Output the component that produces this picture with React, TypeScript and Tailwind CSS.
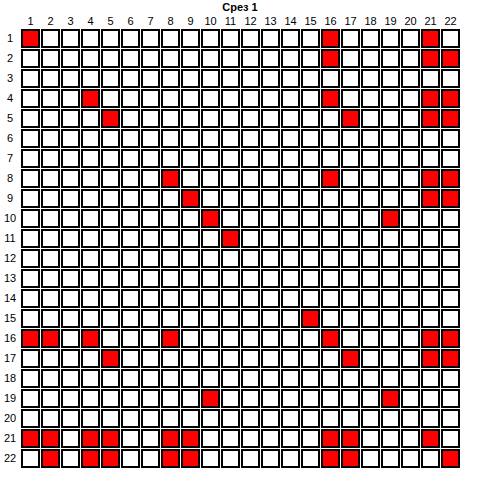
const N = 22;

// red cells per row (1-based column numbers)
const marked: Record<number, number[]> = {
  1: [1, 16, 21],
  2: [16, 21, 22],
  4: [4, 16, 21, 22],
  5: [5, 17, 21, 22],
  8: [8, 16, 21, 22],
  9: [9, 21, 22],
  10: [10, 19],
  11: [11],
  15: [15],
  16: [1, 2, 4, 8, 16, 21, 22],
  17: [5, 17, 21, 22],
  19: [10, 19],
  21: [1, 2, 4, 5, 8, 9, 16, 17, 21],
  22: [2, 4, 5, 8, 9, 16, 17, 22],
};

const nums = Array.from({ length: N }, (_, i) => i + 1);

export default function App() {
  return (
    <div
      className="w-[480px] h-[488px] bg-white text-black text-[11px]"
      style={{ fontFamily: '"Liberation Sans", Arial, sans-serif' }}
    >
      {/* Title */}
      <div className="h-[14px] leading-[14px] text-center font-bold">Срез 1</div>

      <div className="grid grid-cols-[20px_repeat(22,19px)] grid-rows-[14px_repeat(22,19px)] gap-px">
        <div />
        {nums.map((c) => (
          <div key={"h" + c} className="text-center leading-[14px]">
            {c}
          </div>
        ))}

        {nums.map((r) => (
          <div key={"r" + r} className="contents">
            <div className="flex items-center justify-center">{r}</div>
            {nums.map((c) => {
              const on = (marked[r] || []).includes(c);
              return (
                <div
                  key={c}
                  className={"border-2 border-black " + (on ? "bg-[#ff0000]" : "bg-white")}
                />
              );
            })}
          </div>
        ))}
      </div>
    </div>
  );
}
